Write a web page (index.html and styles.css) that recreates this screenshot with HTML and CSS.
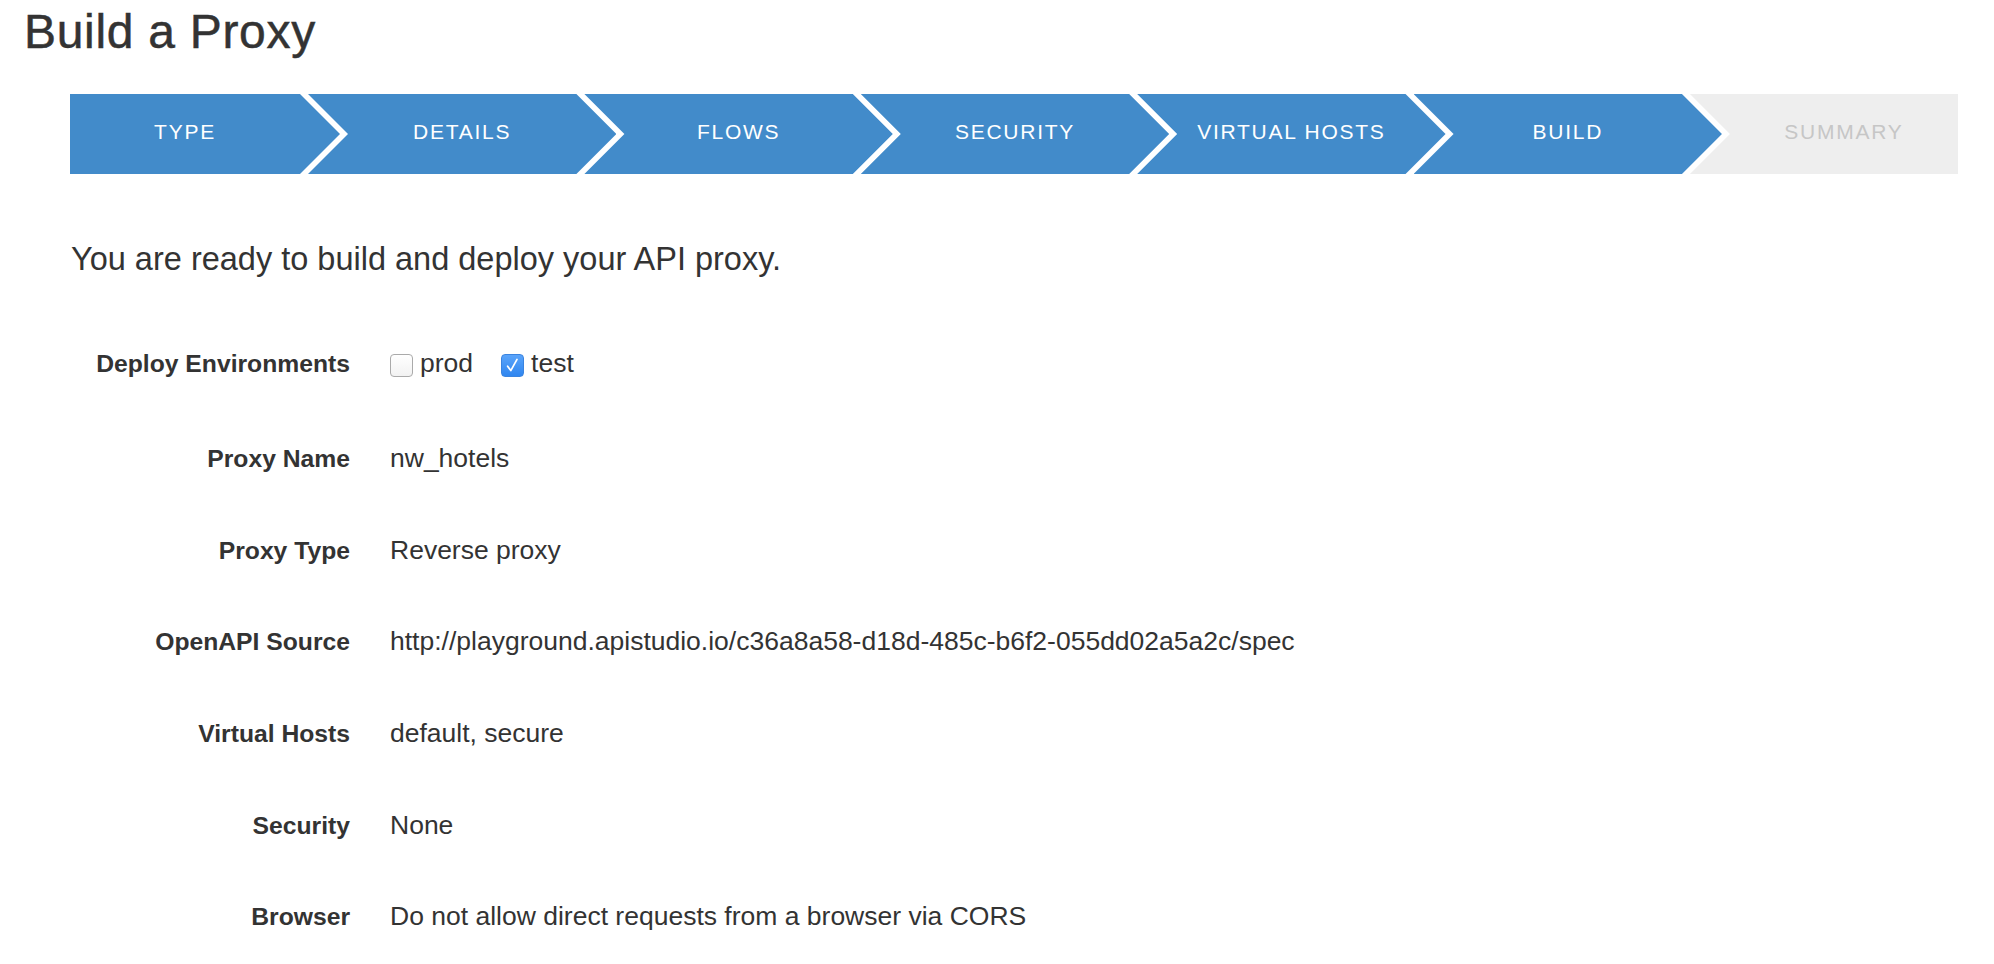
FILE: index.html
```html
<!DOCTYPE html>
<html lang="en">
<head>
<meta charset="utf-8">
<title>Build a Proxy</title>
<link rel="stylesheet" href="styles.css">
</head>
<body>
<div class="page">
  <h1 class="title">Build a Proxy</h1>
  <div class="content">
    <ol class="steps">
      <li class="step step-first">Type</li>
      <li class="step">Details</li>
      <li class="step">Flows</li>
      <li class="step">Security</li>
      <li class="step">Virtual Hosts</li>
      <li class="step">Build</li>
      <li class="step step-last">Summary</li>
    </ol>
    <p class="lead">You are ready to build and deploy your API proxy.</p>
    <div class="summary">
      <div class="row row-env">
        <div class="label">Deploy Environments</div>
        <div class="value value-checks">
          <label class="check"><span class="box"></span>prod</label>
          <label class="check"><span class="box box-on"><svg viewBox="0 0 23 23" width="23" height="23"><path d="M6.6 12.2 L9.8 16.6 L16 5.4" fill="none" stroke="#fff" stroke-width="1.7" stroke-linecap="round" stroke-linejoin="round"/></svg></span>test</label>
        </div>
      </div>
      <div class="row">
        <div class="label">Proxy Name</div>
        <div class="value">nw_hotels</div>
      </div>
      <div class="row">
        <div class="label">Proxy Type</div>
        <div class="value">Reverse proxy</div>
      </div>
      <div class="row">
        <div class="label">OpenAPI Source</div>
        <div class="value">http://playground.apistudio.io/c36a8a58-d18d-485c-b6f2-055dd02a5a2c/spec</div>
      </div>
      <div class="row">
        <div class="label">Virtual Hosts</div>
        <div class="value">default, secure</div>
      </div>
      <div class="row">
        <div class="label">Security</div>
        <div class="value">None</div>
      </div>
      <div class="row">
        <div class="label">Browser</div>
        <div class="value">Do not allow direct requests from a browser via CORS</div>
      </div>
    </div>
  </div>
</div>
</body>
</html>
```
FILE: styles.css
```css
html, body {
  margin: 0;
  padding: 0;
  background: #fff;
}
body {
  font-family: "Liberation Sans", Arial, Helvetica, sans-serif;
  color: #333;
}
.page {
  padding: 8px 36px 0 24px;
}
.title {
  margin: 0;
  font-size: 48px;
  line-height: 48px;
  font-weight: normal;
  letter-spacing: 0.7px;
  color: #333;
  -webkit-text-stroke: 0.5px #333;
}
.content {
  padding-left: 46px;
}
.steps {
  list-style: none;
  margin: 38px 0 0 0;
  padding: 0;
  display: flex;
  height: 80px;
}
.step {
  box-sizing: border-box;
  width: 308.4px;
  flex: none;
  height: 80px;
  margin-left: -32px;
  padding: 0 40px 4px 40px;
  display: flex;
  align-items: center;
  justify-content: center;
  background: #428bca;
  color: #fff;
  font-size: 21px;
  letter-spacing: 1.75px;
  text-transform: uppercase;
  white-space: nowrap;
  clip-path: polygon(0 0, calc(100% - 40px) 0, 100% 50%, calc(100% - 40px) 100%, 0 100%, 40px 50%);
}
.step-first {
  width: 270px;
  margin-left: 0;
  padding: 0 40px 4px 0;
  clip-path: polygon(0 0, calc(100% - 40px) 0, 100% 50%, calc(100% - 40px) 100%, 0 100%);
}
.step-last {
  width: auto;
  flex: 1;
  padding: 0 0 4px 40px;
  background: #eeeeee;
  color: #c6c6c6;
  clip-path: polygon(0 0, 100% 0, 100% 100%, 0 100%, 40px 50%);
}
.lead {
  margin: 65px 0 0 1px;
  font-size: 32.5px;
  line-height: 40px;
}
.summary {
  margin-top: 69px;
}
.row {
  display: flex;
  align-items: baseline;
  height: 30px;
  line-height: 30px;
  margin-bottom: 61.7px;
}
.row-env {
  margin-bottom: 65px;
}
.label {
  width: 280px;
  flex: none;
  text-align: right;
  font-weight: bold;
  font-size: 24.7px;
}
.value {
  margin-left: 40px;
  font-size: 26.5px;
  white-space: nowrap;
}
.value-checks {
  display: flex;
  align-items: baseline;
}
.check {
  display: inline-flex;
  align-items: baseline;
  margin-right: 28px;
}
.box {
  box-sizing: border-box;
  display: inline-block;
  width: 23px;
  height: 23px;
  margin-right: 7px;
  border: 1px solid #aaaaaa;
  border-radius: 4px;
  background: linear-gradient(#ffffff, #f2f2f2);
  align-self: center;
  position: relative;
  top: 2px;
}
.box-on {
  border-color: #3a84e0;
  background: linear-gradient(#5aa4fa, #2f86f0);
}
.box-on svg {
  display: block;
  margin: -1px;
}
```
